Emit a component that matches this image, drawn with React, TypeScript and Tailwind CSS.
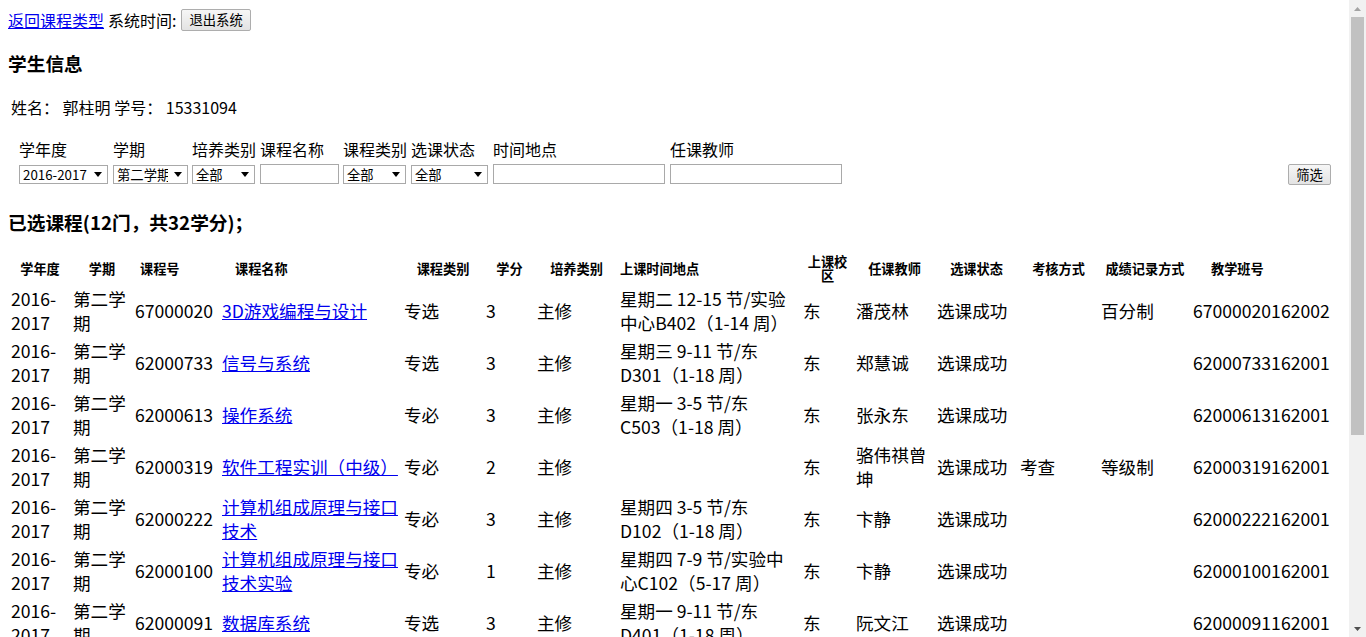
import React from "react";

type Course = {
  year: string;
  term: string;
  code: string;
  name: string;
  kind: string;
  credit: string;
  train: string;
  time: string[];
  campus: string;
  teacher: string;
  status: string;
  exam: string;
  grade: string;
  classNo: string;
};

const courses: Course[] = [
  {
    year: "2016-2017",
    term: "第二学期",
    code: "67000020",
    name: "3D游戏编程与设计",
    kind: "专选",
    credit: "3",
    train: "主修",
    time: ["星期二 12-15 节/实验", "中心B402（1-14 周）"],
    campus: "东",
    teacher: "潘茂林",
    status: "选课成功",
    exam: "",
    grade: "百分制",
    classNo: "67000020162002",
  },
  {
    year: "2016-2017",
    term: "第二学期",
    code: "62000733",
    name: "信号与系统",
    kind: "专选",
    credit: "3",
    train: "主修",
    time: ["星期三 9-11 节/东", "D301（1-18 周）"],
    campus: "东",
    teacher: "郑慧诚",
    status: "选课成功",
    exam: "",
    grade: "",
    classNo: "62000733162001",
  },
  {
    year: "2016-2017",
    term: "第二学期",
    code: "62000613",
    name: "操作系统",
    kind: "专必",
    credit: "3",
    train: "主修",
    time: ["星期一 3-5 节/东", "C503（1-18 周）"],
    campus: "东",
    teacher: "张永东",
    status: "选课成功",
    exam: "",
    grade: "",
    classNo: "62000613162001",
  },
  {
    year: "2016-2017",
    term: "第二学期",
    code: "62000319",
    name: "软件工程实训（中级）",
    kind: "专必",
    credit: "2",
    train: "主修",
    time: [],
    campus: "东",
    teacher: "骆伟祺曾坤",
    status: "选课成功",
    exam: "考查",
    grade: "等级制",
    classNo: "62000319162001",
  },
  {
    year: "2016-2017",
    term: "第二学期",
    code: "62000222",
    name: "计算机组成原理与接口技术",
    kind: "专必",
    credit: "3",
    train: "主修",
    time: ["星期四 3-5 节/东", "D102（1-18 周）"],
    campus: "东",
    teacher: "卞静",
    status: "选课成功",
    exam: "",
    grade: "",
    classNo: "62000222162001",
  },
  {
    year: "2016-2017",
    term: "第二学期",
    code: "62000100",
    name: "计算机组成原理与接口技术实验",
    kind: "专必",
    credit: "1",
    train: "主修",
    time: ["星期四 7-9 节/实验中", "心C102（5-17 周）"],
    campus: "东",
    teacher: "卞静",
    status: "选课成功",
    exam: "",
    grade: "",
    classNo: "62000100162001",
  },
  {
    year: "2016-2017",
    term: "第二学期",
    code: "62000091",
    name: "数据库系统",
    kind: "专选",
    credit: "3",
    train: "主修",
    time: ["星期一 9-11 节/东", "D401（1-18 周）"],
    campus: "东",
    teacher: "阮文江",
    status: "选课成功",
    exam: "",
    grade: "",
    classNo: "62000091162001",
  },
];

const headers = [
  { t: "学年度", c: "text-center" },
  { t: "学期", c: "text-center" },
  { t: "课程号", c: "pl-[6px]" },
  { t: "课程名称", c: "pl-[14px]" },
  { t: "课程类别", c: "text-center" },
  { t: "学分", c: "text-center" },
  { t: "培养类别", c: "text-center" },
  { t: "上课时间地点", c: "pl-[1px]" },
  { t: "上课校区", c: "text-center" },
  { t: "任课教师", c: "text-center" },
  { t: "选课状态", c: "text-center" },
  { t: "考核方式", c: "text-center" },
  { t: "成绩记录方式", c: "text-center" },
  { t: "教学班号", c: "pl-[19px]" },
];

function Arrow() {
  return (
    <svg width="8" height="5" viewBox="0 0 8 5" className="shrink-0">
      <polygon points="0,0 8,0 4,5" fill="#000" />
    </svg>
  );
}

function FakeSelect({ value, w }: { value: string; w: string }) {
  return (
    <div
      className={`${w} mt-[1px] h-[19px] flex items-center border border-[#a9a9a9] bg-white text-[13.33px] leading-[17px]`}
    >
      <span className="flex-1 overflow-hidden whitespace-nowrap pl-[3px]">
        {value}
      </span>
      <span className="w-[19px] flex justify-center">
        <Arrow />
      </span>
    </div>
  );
}

function FakeInput({ w }: { w: string }) {
  return <div className={`${w} h-[20px] border border-[#a9a9a9] bg-white`} />;
}

function Cell({ children, className = "" }: { children?: React.ReactNode; className?: string }) {
  return (
    <div className={`p-[1px] text-[17.6px] leading-[24px] ${className}`}>
      {children}
    </div>
  );
}

export default function App() {
  return (
    <div className="flex h-[637px] overflow-hidden bg-white text-black font-['Microsoft_YaHei','Noto_Sans_CJK_SC',sans-serif]">
      {/* page */}
      <div className="flex-1 overflow-hidden pl-2">
        <div className="mt-[9px] h-[22px] flex items-center text-[16px] whitespace-nowrap">
          <a href="#" className="text-[#0000ee] underline">
            返回课程类型
          </a>
          <span className="ml-[4px]">系统时间:</span>
          <button className="ml-[5px] h-[22px] px-[7px] text-[13.33px] border border-[#adadad] rounded-[2px] bg-gradient-to-b from-[#f6f6f6] to-[#e3e3e3]">
            退出系统
          </button>
        </div>

        <h3 className="mt-[20px] text-[18.72px] leading-[24px] font-bold">学生信息</h3>

        <div className="mt-[20px] pl-[3px] text-[16px] leading-[24px]">
          姓名： 郭柱明 学号： 15331094
        </div>

        <div className="mt-[18px] pl-[11px] pr-[18px] flex text-[16px]">
          <div className="w-[94px] flex flex-col">
            <span className="h-[27px] leading-[24px] whitespace-nowrap">学年度</span>
            <FakeSelect value="2016-2017" w="w-[89px]" />
          </div>
          <div className="w-[79px] flex flex-col">
            <span className="h-[27px] leading-[24px] whitespace-nowrap">学期</span>
            <FakeSelect value="第二学期" w="w-[75px]" />
          </div>
          <div className="w-[68px] flex flex-col">
            <span className="h-[27px] leading-[24px] whitespace-nowrap">培养类别</span>
            <FakeSelect value="全部" w="w-[63px]" />
          </div>
          <div className="w-[83px] flex flex-col">
            <span className="h-[27px] leading-[24px] whitespace-nowrap">课程名称</span>
            <FakeInput w="w-[79px]" />
          </div>
          <div className="w-[68px] flex flex-col">
            <span className="h-[27px] leading-[24px] whitespace-nowrap">课程类别</span>
            <FakeSelect value="全部" w="w-[63px]" />
          </div>
          <div className="w-[82px] flex flex-col">
            <span className="h-[27px] leading-[24px] whitespace-nowrap">选课状态</span>
            <FakeSelect value="全部" w="w-[77px]" />
          </div>
          <div className="w-[177px] flex flex-col">
            <span className="h-[27px] leading-[24px] whitespace-nowrap">时间地点</span>
            <FakeInput w="w-[172px]" />
          </div>
          <div className="w-[172px] flex flex-col">
            <span className="h-[27px] leading-[24px] whitespace-nowrap">任课教师</span>
            <FakeInput w="w-[172px]" />
          </div>
          <div className="ml-auto flex flex-col">
            <span className="h-[27px]" />
            <button className="h-[21px] w-[43px] text-[13.33px] border border-[#adadad] rounded-[2px] bg-gradient-to-b from-[#f6f6f6] to-[#e3e3e3]">
              筛选
            </button>
          </div>
        </div>

        <h3 className="mt-[25px] text-[18.72px] leading-[24px] font-bold">
          已选课程(12门，共32学分)；
        </h3>

        <div className="mt-[18px] p-[2px] grid grid-cols-[60px_60px_85px_180px_80px_49px_81px_181px_51px_79px_81px_79px_90px_147px] gap-[2px] items-center">
          {headers.map((h) => (
            <div
              key={h.t}
              className={`p-[1px] text-[13.2px] leading-[14px] font-bold ${h.c}`}
            >
              {h.t}
            </div>
          ))}
          {courses.map((c) => (
            <React.Fragment key={c.code}>
              <Cell>{c.year}</Cell>
              <Cell>{c.term}</Cell>
              <Cell>{c.code}</Cell>
              <Cell>
                <a href="#" className="text-[#0000ee] underline">
                  {c.name}
                </a>
              </Cell>
              <Cell>{c.kind}</Cell>
              <Cell>{c.credit}</Cell>
              <Cell>{c.train}</Cell>
              <Cell>
                {c.time.map((l, i) => (
                  <div key={i} className="whitespace-nowrap">
                    {l}
                  </div>
                ))}
              </Cell>
              <Cell>{c.campus}</Cell>
              <Cell>{c.teacher}</Cell>
              <Cell>{c.status}</Cell>
              <Cell>{c.exam}</Cell>
              <Cell>{c.grade}</Cell>
              <Cell>{c.classNo}</Cell>
            </React.Fragment>
          ))}
        </div>
      </div>

      {/* scrollbar */}
      <div className="w-[17px] flex flex-col bg-[#f1f1f1]">
        <div className="h-[17px] flex items-center justify-center">
          <svg width="7" height="4" viewBox="0 0 7 4">
            <polygon points="3.5,0 7,4 0,4" fill="#a3a3a3" />
          </svg>
        </div>
        <div className="flex-1 px-[2px]">
          <div className="h-[418px] bg-[#c1c1c1]" />
        </div>
        <div className="h-[17px] flex items-center justify-center">
          <svg width="7" height="4" viewBox="0 0 7 4">
            <polygon points="0,0 7,0 3.5,4" fill="#505050" />
          </svg>
        </div>
      </div>
    </div>
  );
}
